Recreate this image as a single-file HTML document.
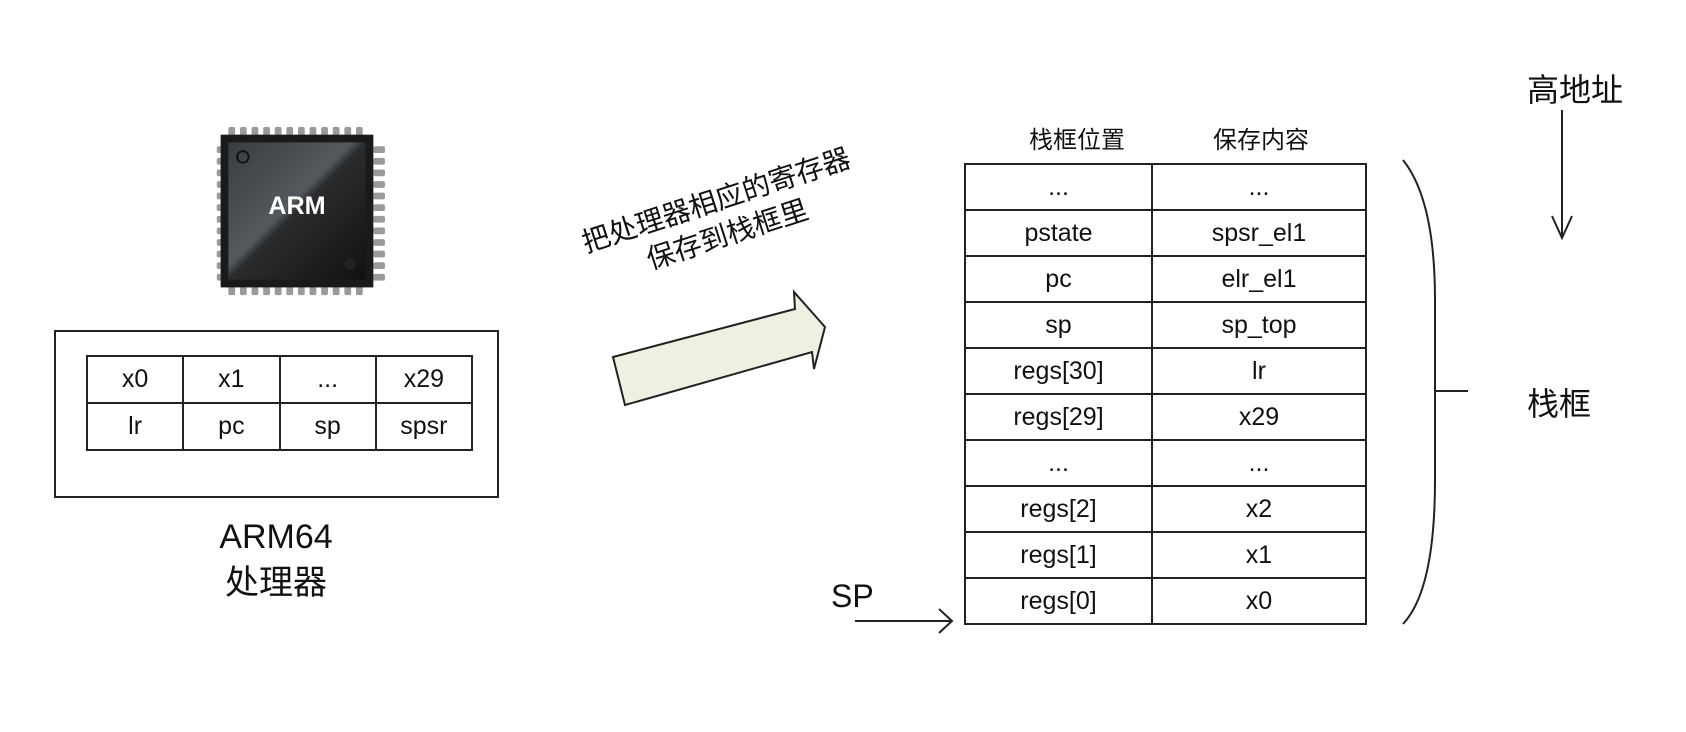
<!DOCTYPE html>
<html><head><meta charset="utf-8"><style>
body{margin:0;width:1686px;height:732px;background:#fff;position:relative;overflow:hidden;font-family:"Liberation Sans","Noto Sans CJK SC",sans-serif;color:#111}
.a{position:absolute}
table{border-collapse:collapse;position:absolute;table-layout:fixed}
td{border:2px solid #222;text-align:center;padding:0;font-size:25px}
</style></head><body>
<svg class="a" style="left:207px;top:125px" width="180" height="174" viewBox="0 0 186 180">
<g fill="#9a9a9a">
<g id="t"><rect x="22" y="2" width="7" height="12" rx="2"/><rect x="34" y="2" width="7" height="12" rx="2"/><rect x="46" y="2" width="7" height="12" rx="2"/><rect x="58" y="2" width="7" height="12" rx="2"/><rect x="70" y="2" width="7" height="12" rx="2"/><rect x="82" y="2" width="7" height="12" rx="2"/><rect x="94" y="2" width="7" height="12" rx="2"/><rect x="106" y="2" width="7" height="12" rx="2"/><rect x="118" y="2" width="7" height="12" rx="2"/><rect x="130" y="2" width="7" height="12" rx="2"/><rect x="142" y="2" width="7" height="12" rx="2"/><rect x="154" y="2" width="7" height="12" rx="2"/></g>
<use href="#t" transform="translate(0,162)"/>
<use href="#t" transform="translate(186,0) rotate(90)"/>
<use href="#t" transform="translate(24,0) rotate(90)"/>
</g>
<defs><linearGradient id="g" x1="0" y1="0" x2="1" y2="1"><stop offset="0" stop-color="#3a3d40"/><stop offset="0.45" stop-color="#55595c"/><stop offset="0.5" stop-color="#2a2c2e"/><stop offset="1" stop-color="#111"/></linearGradient></defs>
<rect x="14" y="10" width="158" height="158" fill="#1a1a1a"/>
<rect x="22" y="18" width="142" height="142" fill="url(#g)"/>
<circle cx="37" cy="33" r="6" fill="none" stroke="#111" stroke-width="2"/>
<circle cx="148" cy="144" r="6" fill="#222"/>
<text x="93" y="92" text-anchor="middle" fill="#fff" font-size="26" font-weight="bold" font-family="Liberation Sans">ARM</text>
</svg>
<div class="a" style="left:54px;top:330px;width:441px;height:164px;border:2px solid #222"></div>
<table style="left:86px;top:355px;width:387px;height:96px">
<tr><td>x0</td><td>x1</td><td>...</td><td>x29</td></tr>
<tr><td>lr</td><td>pc</td><td>sp</td><td>spsr</td></tr>
</table>
<div class="a" style="left:176px;top:514px;width:200px;text-align:center;font-size:34px;line-height:46px">ARM64<br>处理器</div>
<svg class="a" style="left:600px;top:280px" width="240" height="140">
<polygon points="13,77 25,125 212,72 214,89 225,47 194,12 195,29" fill="#eef0e2" stroke="#222" stroke-width="2"/>
</svg>
<div class="a" style="left:532px;top:182px;width:380px;text-align:center;font-size:28px;line-height:36px;transform:rotate(-18deg)">把处理器相应的寄存器<br>保存到栈框里</div>
<div class="a" style="left:1017px;top:120px;width:120px;text-align:center;font-size:24px">栈框位置</div>
<div class="a" style="left:1201px;top:120px;width:120px;text-align:center;font-size:24px">保存内容</div>
<table style="left:964px;top:163px;width:403px;height:462px">
<tr><td style="width:185px">...</td><td>...</td></tr>
<tr><td>pstate</td><td>spsr_el1</td></tr>
<tr><td>pc</td><td>elr_el1</td></tr>
<tr><td>sp</td><td>sp_top</td></tr>
<tr><td>regs[30]</td><td>lr</td></tr>
<tr><td>regs[29]</td><td>x29</td></tr>
<tr><td>...</td><td>...</td></tr>
<tr><td>regs[2]</td><td>x2</td></tr>
<tr><td>regs[1]</td><td>x1</td></tr>
<tr><td>regs[0]</td><td>x0</td></tr>
</table>
<svg class="a" style="left:0;top:0" width="1686" height="732">
<path d="M1403,160 Q1435,200 1435,300 L1435,480 Q1435,590 1403,624" fill="none" stroke="#222" stroke-width="2"/>
<line x1="1435" y1="391" x2="1468" y2="391" stroke="#222" stroke-width="2"/>
<line x1="1562" y1="110" x2="1562" y2="236" stroke="#222" stroke-width="2"/>
<path d="M1552,216 L1562,238 L1572,216" fill="none" stroke="#222" stroke-width="2"/>
<line x1="855" y1="621" x2="951" y2="621" stroke="#222" stroke-width="2"/>
<path d="M939,609 L952,621 L939,633" fill="none" stroke="#222" stroke-width="2"/>
</svg>
<div class="a" style="left:1527px;top:65px;font-size:32px">高地址</div>
<div class="a" style="left:1527px;top:379px;font-size:32px">栈框</div>
<div class="a" style="left:831px;top:578px;font-size:32px">SP</div>
</body></html>
